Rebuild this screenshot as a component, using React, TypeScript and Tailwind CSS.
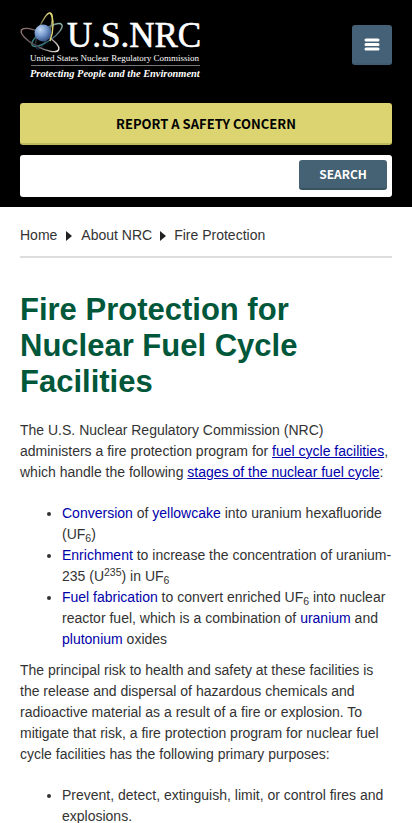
import type { ReactNode } from "react";

function Logo() {
  return (
    <svg
      width="184"
      height="74"
      viewBox="18 10 184 74"
      role="img"
      aria-label="U.S. NRC"
      className="block shrink-0"
    >
      <defs>
        <radialGradient id="core" cx="0.35" cy="0.3" r="0.75">
          <stop offset="0" stopColor="#c3d8f2" />
          <stop offset="0.5" stopColor="#7598cc" />
          <stop offset="1" stopColor="#2c4a80" />
        </radialGradient>
        <linearGradient id="orbitGold" x1="0" y1="0" x2="1" y2="0">
          <stop offset="0" stopColor="#16263d" />
          <stop offset="0.6" stopColor="#5e6245" />
          <stop offset="1" stopColor="#eadf7a" />
        </linearGradient>
        <linearGradient id="orbitRose" x1="0" y1="0" x2="1" y2="0">
          <stop offset="0" stopColor="#9a7a78" />
          <stop offset="0.5" stopColor="#45434a" />
          <stop offset="1" stopColor="#f0e4dc" />
        </linearGradient>
        <linearGradient id="orbitTeal" x1="0" y1="0" x2="1" y2="0">
          <stop offset="0" stopColor="#3c8f8d" />
          <stop offset="0.5" stopColor="#2d536c" />
          <stop offset="1" stopColor="#93b8ad" />
        </linearGradient>
      </defs>
      <g fill="none" strokeWidth="1.4">
        <ellipse cx="44" cy="31" rx="19" ry="5.5" transform="rotate(-70 44 31)" stroke="url(#orbitGold)" />
        <ellipse cx="47" cy="35" rx="18" ry="6" transform="rotate(-35 47 35)" stroke="url(#orbitTeal)" />
        <ellipse cx="40" cy="40" rx="21" ry="7" transform="rotate(28 40 40)" stroke="url(#orbitRose)" />
      </g>
      <circle cx="43" cy="33" r="8.5" fill="url(#core)" />
      <path d="M50 13C54 17 54 31 50 41" fill="none" stroke="#e2d873" strokeWidth="1.4" />
      <g fill="#fff" fontFamily="'Liberation Serif', serif">
        <text x="67" y="47" fontSize="35" stroke="#fff" strokeWidth="0.6">U.S.NRC</text>
        <text x="30" y="61" fontSize="9">United States Nuclear Regulatory Commission</text>
        <text x="30" y="77" fontSize="10.4" fontWeight="700" fontStyle="italic">
          Protecting People and the Environment
        </text>
      </g>
      <path d="M31 65.5H200" stroke="#777" strokeWidth="1" />
    </svg>
  );
}

function Caret() {
  return (
    <svg width="6" height="10" viewBox="0 0 6 10" aria-hidden="true">
      <path d="M0 0L6 5L0 10Z" fill="#222" />
    </svg>
  );
}

function TextLink({ children, underlined = false }: { children: ReactNode; underlined?: boolean }) {
  return (
    <a href="#" className={underlined ? "text-[#0000aa] underline" : "text-[#0000aa]"}>
      {children}
    </a>
  );
}

export default function App() {
  return (
    <div className="min-h-screen bg-white font-['Liberation_Sans',Arial,sans-serif] text-sm leading-[21px] text-[#333]">
      <header className="bg-black px-5 pt-[10px] pb-[10px]">
        <div className="flex items-start justify-between pb-[19px]">
          <a href="#" className="-ml-[2px]">
            <Logo />
          </a>
          <button
            type="button"
            aria-label="Menu"
            className="mt-[15px] flex size-10 items-center justify-center rounded-[3px] border-b-2 border-[#3f5d72] bg-[#446178]"
          >
            <svg width="16" height="14" viewBox="0 0 16 14" aria-hidden="true">
              <path d="M2 3H14M2 7.5H14M2 12H14" stroke="#fff" strokeWidth="3" strokeLinecap="round" />
            </svg>
          </button>
        </div>
        <div className="flex flex-col gap-[10px] font-['Noto_Sans_CJK_SC',sans-serif] font-bold">
          <button
            type="button"
            className="h-[42px] w-full rounded-[3px] border-b-2 border-[#bdb95e] bg-[#dbd471] text-[13px] text-black uppercase"
          >
            Report a Safety Concern
          </button>
          <form className="flex h-[42px] items-start rounded-[3px] bg-white p-[5px]" onSubmit={(e) => e.preventDefault()}>
            <input
              type="search"
              aria-label="Search"
              className="h-8 min-w-0 flex-1 bg-transparent px-2 text-sm font-normal text-black outline-none"
            />
            <button
              type="submit"
              className="h-[30px] w-[88px] rounded-[3px] border-b-2 border-[#38525f] bg-[#446273] text-xs text-white uppercase"
            >
              Search
            </button>
          </form>
        </div>
      </header>

      <main className="px-5">
        <nav aria-label="Breadcrumb" className="border-b-2 border-[#ddd] pt-[18px] pb-[10px]">
          <ol className="flex items-center">
            <li><a href="#">Home</a></li>
            <li className="flex items-center gap-[9px] pl-[9px]"><Caret /><a href="#">About NRC</a></li>
            <li className="flex items-center gap-2 pl-2"><Caret /><span>Fire Protection</span></li>
          </ol>
        </nav>

        <h1 className="mt-[34px] text-[31px] leading-9 font-bold text-[#00573a]">
          Fire Protection for Nuclear Fuel Cycle Facilities
        </h1>

        <p className="mt-5">
          The U.S. Nuclear Regulatory Commission (NRC) administers a fire protection program for{" "}
          <TextLink underlined>fuel cycle facilities</TextLink>, which handle the following{" "}
          <TextLink underlined>stages of the nuclear fuel cycle</TextLink>:
        </p>

        <ul className="mt-5 list-disc pl-[42px]">
          <li>
            <TextLink>Conversion</TextLink> of <TextLink>yellowcake</TextLink> into uranium hexafluoride (UF<sub>6</sub>)
          </li>
          <li>
            <TextLink>Enrichment</TextLink> to increase the concentration of uranium-235 (U<sup>235</sup>) in UF<sub>6</sub>
          </li>
          <li>
            <TextLink>Fuel fabrication</TextLink> to convert enriched UF<sub>6</sub> into nuclear reactor fuel, which is a
            combination of <TextLink>uranium</TextLink> and <TextLink>plutonium</TextLink> oxides
          </li>
        </ul>

        <p className="mt-[10px]">
          The principal risk to health and safety at these facilities is the release and dispersal of hazardous chemicals
          and radioactive material as a result of a fire or explosion. To mitigate that risk, a fire protection program
          for nuclear fuel cycle facilities has the following primary purposes:
        </p>

        <ul className="mt-5 list-disc pl-[42px]">
          <li>Prevent, detect, extinguish, limit, or control fires and explosions.</li>
        </ul>
      </main>
    </div>
  );
}
